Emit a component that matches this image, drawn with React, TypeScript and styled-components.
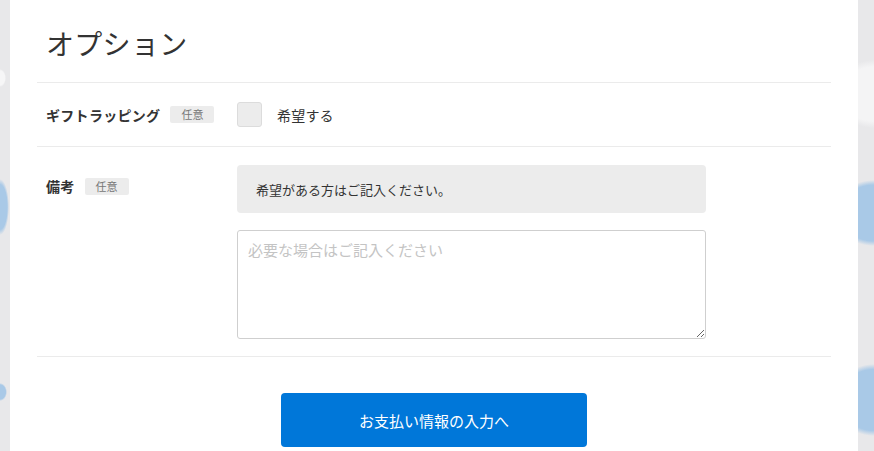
import styled, { createGlobalStyle } from 'styled-components';

const GlobalStyle = createGlobalStyle`
  html, body {
    margin: 0;
    padding: 0;
  }
  body {
    font-family: "Noto Sans CJK JP", "Noto Sans", "Liberation Sans", sans-serif;
    color: #333;
    background-color: #e8e8ea;
    background-image:
      radial-gradient(ellipse 6px 9px at 0px 78px, #f6f6f7 80%, transparent 100%),
      radial-gradient(ellipse 9px 28px at 0px 207px, #a9c9e7 80%, transparent 100%),
      radial-gradient(ellipse 7px 9px at 0px 392px, #a9c9e7 80%, transparent 100%),
      radial-gradient(ellipse 40px 34px at 874px 94px, #f4f4f5 80%, transparent 100%),
      radial-gradient(ellipse 40px 33px at 874px 213px, #a9c9e7 85%, transparent 100%),
      radial-gradient(ellipse 40px 36px at 874px 400px, #a9c9e7 85%, transparent 100%);
    background-repeat: no-repeat;
    overflow: hidden;
  }
`;

const Page = styled.div`
  display: flex;
  padding-left: 10px;
  min-height: 451px;
`;

const Card = styled.section`
  width: 848px;
  background: #fff;
  padding: 0 27px;
  box-sizing: border-box;
`;

const Heading = styled.h2`
  margin: 0;
  padding: 21px 9px 17px;
  font-size: 28px;
  font-weight: 400;
  line-height: 44px;
  letter-spacing: 0.3px;
  border-bottom: 1px solid #ebebeb;
`;

const Row = styled.div<{ $align: 'center' | 'start' }>`
  display: flex;
  align-items: ${(p) => (p.$align === 'center' ? 'center' : 'flex-start')};
  padding: ${(p) => (p.$align === 'center' ? '19px 9px' : '18px 9px 17px')};
  border-bottom: 1px solid #ebebeb;
`;

const LabelCol = styled.div<{ $offset?: number }>`
  width: 191px;
  flex-shrink: 0;
  display: flex;
  align-items: center;
  gap: 10px;
  margin-top: ${(p) => p.$offset ?? 0}px;
`;

const Label = styled.span`
  font-size: 14px;
  font-weight: 700;
  letter-spacing: 0.3px;
`;

const Badge = styled.span`
  display: inline-block;
  background: #ececec;
  color: #777;
  font-size: 11px;
  line-height: 17px;
  padding: 0 11px;
  border-radius: 2px;
`;

const Field = styled.div`
  display: flex;
  flex-direction: column;
  gap: 17px;
  width: 469px;
`;

const CheckLine = styled.label`
  display: flex;
  align-items: center;
  gap: 15px;
  font-size: 14px;
  letter-spacing: 0.2px;
`;

const CheckBox = styled.span`
  width: 25px;
  height: 25px;
  box-sizing: border-box;
  background: #ececec;
  border: 1px solid #dcdcdc;
  border-radius: 3px;
`;

const Note = styled.div`
  background: #ececec;
  border-radius: 4px;
  height: 48px;
  padding: 0 19px;
  display: flex;
  align-items: center;
  font-size: 13px;
`;

const TextArea = styled.textarea`
  display: block;
  width: 469px;
  height: 109px;
  box-sizing: border-box;
  border: 1px solid #cfcfcf;
  border-radius: 3px;
  padding: 8px 10px;
  font-family: inherit;
  font-size: 15px;
  color: #333;
  resize: vertical;
  outline: none;
  &::placeholder {
    color: #c4c4c4;
  }
`;

const Actions = styled.div`
  display: flex;
  justify-content: center;
  padding-top: 36px;
`;

const Submit = styled.button`
  width: 306px;
  height: 54px;
  border: none;
  border-radius: 4px;
  background: #0077d9;
  color: #fff;
  font-family: inherit;
  font-size: 15px;
  cursor: pointer;
`;

export default function App() {
  return (
    <>
      <GlobalStyle />
      <Page>
        <Card>
          <Heading>オプション</Heading>
          <Row $align="center">
            <LabelCol>
              <Label>ギフトラッピング</Label>
              <Badge>任意</Badge>
            </LabelCol>
            <CheckLine>
              <CheckBox />
              希望する
            </CheckLine>
          </Row>
          <Row $align="start">
            <LabelCol $offset={11}>
              <Label>備考</Label>
              <Badge>任意</Badge>
            </LabelCol>
            <Field>
              <Note>希望がある方はご記入ください。</Note>
              <TextArea placeholder="必要な場合はご記入ください" />
            </Field>
          </Row>
          <Actions>
            <Submit>お支払い情報の入力へ</Submit>
          </Actions>
        </Card>
      </Page>
    </>
  );
}
